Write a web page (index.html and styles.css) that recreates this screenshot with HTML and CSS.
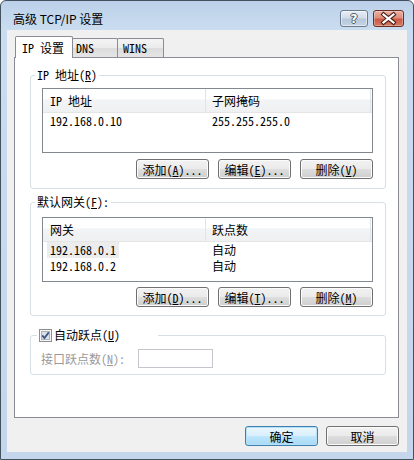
FILE: index.html
```html
<!DOCTYPE html>
<html lang="zh-CN">
<head>
    <meta charset="UTF-8">
    <meta name="viewport" content="width=device-width, initial-scale=1.0">
    <title>高级 TCP/IP 设置</title>
    <link rel="stylesheet" href="styles.css">
</head>
<body>
    <div class="window">
        <div class="titlebar">
            <span class="title">高级 TCP/IP 设置</span>
            <span class="caption-btn help"><span class="help-glyph">?</span></span>
            <span class="caption-btn close">
                <svg width="31" height="17" viewBox="0 0 31 17">
                    <path d="M10.5 4.5 L20.5 12.5 M20.5 4.5 L10.5 12.5" stroke="#4a1e17" stroke-width="4.2" stroke-linecap="square" fill="none"/>
                    <path d="M10.5 4.5 L20.5 12.5 M20.5 4.5 L10.5 12.5" stroke="#ffffff" stroke-width="2.2" stroke-linecap="square" fill="none"/>
                </svg>
            </span>
        </div>

        <div class="client">
            <div class="tabs">
                <div class="tab active">IP 设置</div>
                <div class="tab">DNS</div>
                <div class="tab wins">WINS</div>
            </div>

            <div class="panel">
                <fieldset class="group">
                    <legend>IP 地址(<u>R</u>)</legend>
                    <div class="listview">
                        <div class="lv-head">
                            <span class="col1">IP 地址</span>
                            <span class="col2">子网掩码</span>
                            <span class="col-rest"></span>
                        </div>
                        <div class="lv-row">
                            <span class="cell1"><span class="item">192.168.0.10</span></span>
                            <span class="cell2">255.255.255.0</span>
                        </div>
                    </div>
                    <div class="btn-row">
                        <button class="btn">添加(<u>A</u>)...</button>
                        <button class="btn">编辑(<u>E</u>)...</button>
                        <button class="btn">删除(<u>V</u>)</button>
                    </div>
                </fieldset>

                <fieldset class="group gateways">
                    <legend>默认网关(<u>F</u>):</legend>
                    <div class="listview">
                        <div class="lv-head">
                            <span class="col1">网关</span>
                            <span class="col2">跃点数</span>
                            <span class="col-rest"></span>
                        </div>
                        <div class="lv-row">
                            <span class="cell1"><span class="item focused">192.168.0.1</span></span>
                            <span class="cell2">自动</span>
                        </div>
                        <div class="lv-row">
                            <span class="cell1"><span class="item">192.168.0.2</span></span>
                            <span class="cell2">自动</span>
                        </div>
                    </div>
                    <div class="btn-row">
                        <button class="btn">添加(<u>D</u>)...</button>
                        <button class="btn">编辑(<u>T</u>)...</button>
                        <button class="btn">删除(<u>M</u>)</button>
                    </div>
                </fieldset>

                <fieldset class="group metric">
                    <legend class="check-legend">
                        <svg class="checkbox" width="13" height="13" viewBox="0 0 13 13">
                            <rect x="0.5" y="0.5" width="12" height="12" fill="#f6f6f6" stroke="#8e8f8f"/>
                            <rect x="2.5" y="2.5" width="8" height="8" fill="#dde1e7" stroke="#aeb4bd"/>
                            <path d="M3.2 6.4 L5.4 9 L9.8 3.4" fill="none" stroke="#41548a" stroke-width="1.8"/>
                        </svg>
                        <span>自动跃点(<u>U</u>)</span>
                    </legend>
                    <div class="hop-row">
                        <span class="hop-label">接口跃点数(<u>N</u>):</span>
                        <input class="hop-input" type="text" disabled>
                    </div>
                </fieldset>
            </div>

            <div class="dlg-buttons">
                <button class="btn default">确定</button>
                <button class="btn">取消</button>
            </div>
        </div>
    </div>
</body>
</html>
```

FILE: styles.css
```css
* {
    box-sizing: border-box;
}

body {
    margin: 0;
    background: #ffffff;
    font-family: "Noto Sans Mono CJK SC", "Noto Sans CJK SC", sans-serif;
    font-size: 12px;
    color: #000000;
}

.window {
    width: 414px;
    height: 460px;
    display: flex;
    flex-direction: column;
    padding: 0 6px 7px;
    border: 1px solid #44515f;
    border-radius: 6px 6px 0 0;
    background: linear-gradient(to bottom, #bcd1e9 0, #cadcef 28px, #c3d6ec 100%);
}

/* title bar */
.titlebar {
    height: 29px;
    display: flex;
    align-items: center;
    padding: 6px 3px 0 6px;
}

.title {
    flex: 1;
    font-family: "Noto Sans CJK SC", sans-serif;
    font-size: 12px;
    line-height: 14px;
}

.caption-btn {
    height: 17px;
    border-radius: 3px;
    display: flex;
    align-items: center;
    justify-content: center;
}

.help {
    width: 28px;
    border: 1px solid #6b7a8d;
    background: linear-gradient(to bottom, #e6edf6 0%, #d0dcea 48%, #b7c7da 52%, #c4d3e4 100%);
    box-shadow: inset 0 0 0 1px rgba(255, 255, 255, 0.5);
}

.help-glyph {
    font-family: "DejaVu Sans", sans-serif;
    font-weight: bold;
    font-size: 12px;
    line-height: 12px;
    color: #ffffff;
    text-shadow: 1px 0 #4b5869, -1px 0 #4b5869, 0 1px #4b5869, 0 -1px #4b5869;
}

.close {
    width: 31px;
    margin-left: 5px;
    border: 1px solid #6a2e25;
    background: linear-gradient(to bottom, #eab1a4 0%, #de8d7b 45%, #cc5a45 55%, #d27a62 100%);
    box-shadow: inset 0 0 0 1px rgba(255, 255, 255, 0.3);
}

.close svg {
    display: block;
    margin: -1px;
}

/* client area */
.client {
    flex: 1;
    display: flex;
    flex-direction: column;
    padding: 6px 8px 0 7px;
    background: #f0f0f0;
}

.tabs {
    display: flex;
    align-items: flex-end;
    height: 21px;
    margin-left: 1px;
}

.tab {
    height: 19px;
    width: 46px;
    margin-left: -1px;
    padding-left: 3px;
    border: 1px solid #898c95;
    border-bottom: none;
    background: linear-gradient(to bottom, #f4f4f4 0%, #ebebeb 50%, #dcdcdc 51%, #e5e5e5 100%);
    line-height: 18px;
    border-radius: 2px 2px 0 0;
}

.tab.wins {
    width: 47px;
    padding-left: 5px;
}

.tab.active {
    position: relative;
    z-index: 1;
    height: 22px;
    width: 58px;
    margin-left: 0;
    margin-bottom: -1px;
    padding-left: 6px;
    background: #ffffff;
    line-height: 21px;
}

.panel {
    height: 361px;
    border: 1px solid #898c95;
    background: #ffffff;
    padding: 10px 12px 0 15px;
}

.group {
    margin: 0;
    min-width: 0;
    border: 1px solid #d5dfe5;
    border-radius: 3px;
    padding: 6px 12px 9px 11px;
}

.group legend {
    padding: 0 2px;
    margin-left: -7px;
    line-height: 14px;
}

.group.gateways {
    margin-top: 6px;
    padding-top: 8px;
    padding-bottom: 8px;
}

.group.gateways .btn-row {
    margin-top: 5px;
}

/* list view */
.listview {
    height: 65px;
    border: 1px solid #828790;
    background: #ffffff;
}

.lv-head {
    display: flex;
    height: 24px;
    border-bottom: 1px solid #e5e5e5;
    background: linear-gradient(to bottom, #ffffff 0%, #ffffff 45%, #f3f4f6 46%, #eff0f2 100%);
}

.lv-head span {
    line-height: 23px;
    border-right: 1px solid #e1e3e8;
}

.lv-head .col1 {
    width: 163px;
    padding-left: 7px;
}

.lv-head .col2 {
    width: 165px;
    padding-left: 6px;
}

.lv-head .col-rest {
    width: 1px;
    border-right: none;
}

.lv-row {
    display: flex;
    height: 16px;
    line-height: 16px;
}

.cell1 {
    width: 163px;
    padding-left: 4px;
}

.cell2 {
    width: 165px;
    padding-left: 6px;
}

.item {
    display: inline-block;
    padding: 0 3px;
}

.item.focused {
    background: #ececec;
}

/* buttons */
.btn-row {
    display: flex;
    justify-content: flex-end;
    gap: 9px;
    margin-top: 6px;
}

.btn {
    width: 73px;
    height: 20px;
    padding: 0;
    font: inherit;
    color: #000000;
    border: 1px solid #707070;
    border-radius: 3px;
    background: linear-gradient(to bottom, #f2f2f2 0%, #ebebeb 48%, #dddddd 52%, #cfcfcf 100%);
    box-shadow: inset 0 0 0 1px #fbfbfb;
}

.btn.default {
    border-color: #3c7fb1;
    background: linear-gradient(to bottom, #eaf6fd 0%, #d9f0fc 48%, #bee6fd 52%, #a7d9f5 100%);
    box-shadow: inset 0 0 0 1px #b5e0f8;
}

/* hop metric */
.group.metric {
    margin-top: 11px;
    padding: 6px 10px 6px 10px;
}

.group .check-legend {
    display: flex;
    align-items: center;
    gap: 2px;
    width: 121px;
    margin-left: -4px;
    line-height: 16px;
}

.checkbox {
    display: block;
}

.hop-row {
    display: flex;
    align-items: center;
}

.hop-label {
    width: 97px;
    color: #9a9a9a;
}

.hop-input {
    width: 75px;
    height: 19px;
    border: 1px solid #c3c7cd;
    background: #ffffff;
}

.dlg-buttons {
    display: flex;
    justify-content: flex-end;
    gap: 8px;
    margin-top: 8px;
}
```
